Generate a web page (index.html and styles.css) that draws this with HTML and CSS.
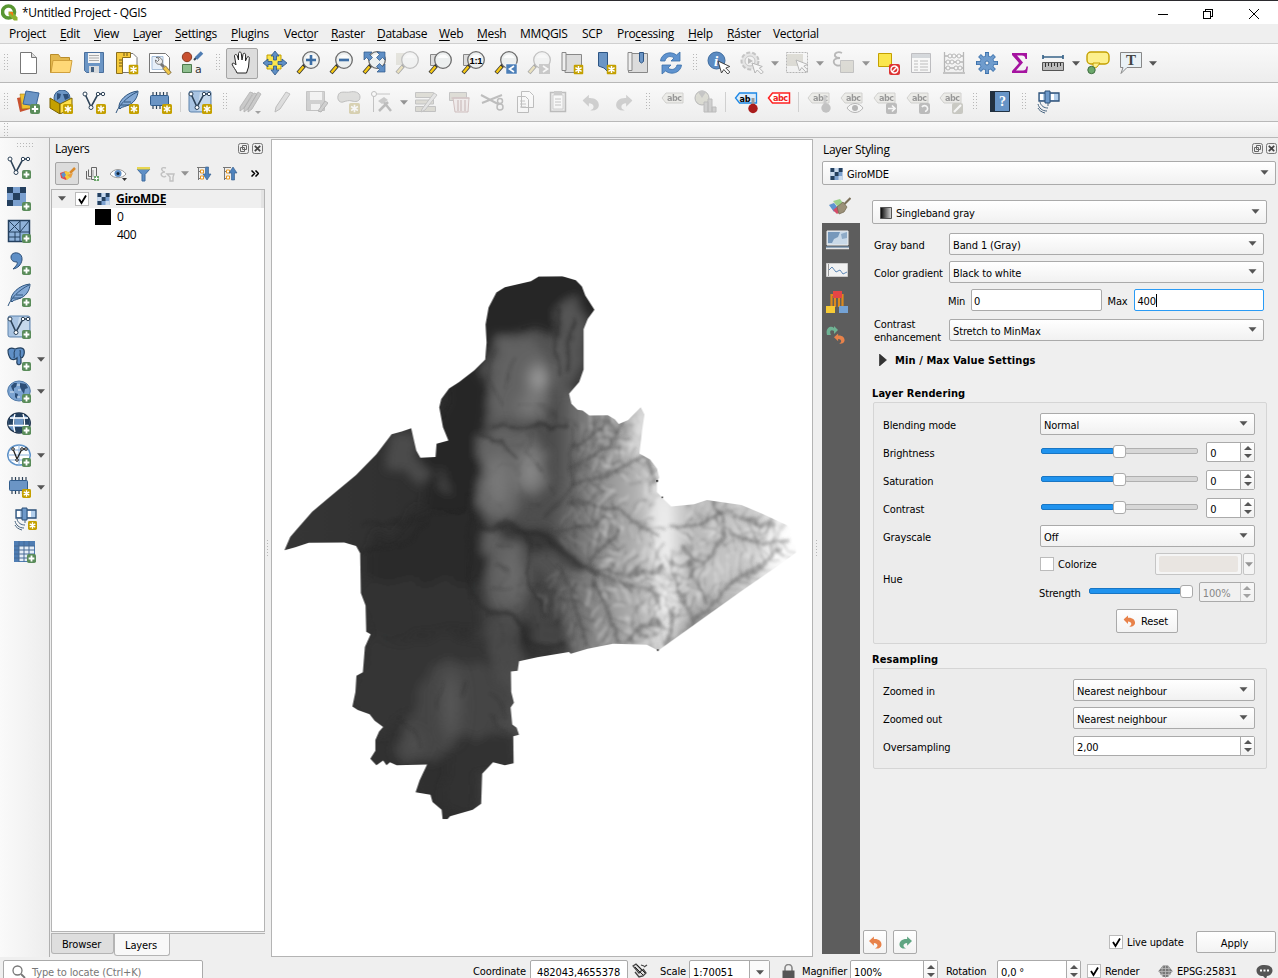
FILE: index.html
```html
<!DOCTYPE html>
<html lang="en">
<head>
<meta charset="utf-8">
<title>*Untitled Project - QGIS</title>
<link rel="stylesheet" href="styles.css">
</head>
<body>
<svg class="defs" width="0" height="0">
  <defs>
    <symbol id="new" viewBox="0 0 10 10"><rect width="10" height="10" rx="1.6" fill="#c4a000"/><path d="M5 1.5v7M1.9 3.2l6.2 3.6M8.1 3.2L1.9 6.8" stroke="#fff" stroke-width="1.500"/></symbol>
    <symbol id="add" viewBox="0 0 10 10"><rect width="10" height="10" rx="2" fill="#5a8c5a"/><path d="M5 1.800v6.400M1.800 5h6.400" stroke="#fff" stroke-width="2"/></symbol>
    <symbol id="lens" viewBox="0 0 24 24"><path d="M9 14l-7 8" stroke="#333" stroke-width="4"/><path d="M7.500 15.500l-5 6" stroke="#f6c915" stroke-width="2.400"/><circle cx="15" cy="9" r="8.300" fill="#ecefef" stroke="#6b6b6b" stroke-width="1.300"/><path d="M9.500 7a6 6 0 0 1 11 0" fill="#fff" opacity=".8"/></symbol>
    <symbol id="raster" viewBox="0 0 12 12"><path fill="#7ba0cf" d="M0 0h12v12H0z"/><path fill="#24405f" d="M0 0h4v4H0zM8 0h4v4H8zM4 4h4v4H4zM0 8h4v4H0z"/><path fill="#c9daee" d="M4 0h4v4H4zM0 4h4v4H0zM8 8h4v4H8z"/></symbol>
    <symbol id="down" viewBox="0 0 8 5"><path d="M0 .3h8L4 4.700z" fill="#555"/></symbol>
    <symbol id="undo" viewBox="0 0 12 12"><path d="M0 4.500L4.500.5v2.300C9 2.500 12 5 11.500 8.500 11 11 8.500 12 5.500 11.500 9 10.500 8.500 6.500 4.500 6.500V9z" fill="#e8824a"/></symbol>
    <symbol id="vee" viewBox="0 0 24 24"><path d="M3 4l6 13 7-13h5" fill="none" stroke="#2d4257" stroke-width="1.600"/><g fill="#fff" stroke="#2d4257"><circle cx="3" cy="4" r="2"/><circle cx="9" cy="17.500" r="2"/><circle cx="16" cy="4" r="1.700"/><circle cx="21" cy="4" r="1.700"/></g></symbol>
    <symbol id="veebox" viewBox="0 0 24 24"><rect x="1" y="1" width="22" height="21" rx="2" fill="#a9c4e2" stroke="#5f84ad"/><path d="M12 2h10v19H9z" fill="#dbe7f4" opacity=".6"/><use href="#vee" width="24" height="24"/></symbol>
    <symbol id="feather" viewBox="0 0 24 24"><path d="M4 18C3 11 12 2 23 1c0 6-4 13-12 15-2 1-5 1-6 3z" fill="#85aad6" stroke="#30567f"/><path d="M1 23C4 15 12 7 22 2M9 12h7M6 15l8 0" fill="none" stroke="#30567f"/></symbol>
    <symbol id="chip" viewBox="0 0 24 24"><path d="M5 2v17M8.500 2v17M12 2v17M15.500 2v17M19 2v17" stroke="#2d4257" stroke-width="1.200"/><rect x="2.500" y="5.500" width="18" height="10" rx="1" fill="#6b95c5" stroke="#325d8c"/></symbol>
    <symbol id="sat" viewBox="0 0 24 24"><path d="M2 3h20v8H2z" fill="#b3cfec" stroke="#2c5078" stroke-width="1.300"/><path d="M3 4h3v6H3zM14 4h3v6h-3z" fill="#fff"/><path d="M8 1h5v12H8z" fill="#6d99ca" stroke="#2c5078"/><path d="M11 13v3M1 14c1 4 4 7 9 7M3 12c1 4 4 6 8 6M1 18c1 2 3 4 7 5" fill="none" stroke="#46637f"/></symbol>
    <symbol id="tag" viewBox="0 0 24 24"><path d="M1 8l4-5h17v10H5z" fill="#dedccc" stroke="#99958a"/><text x="6" y="11" font-size="9" font-weight="bold" font-family="DejaVu Sans Condensed" textLength="15">abc</text></symbol>
    <symbol id="float" viewBox="0 0 11 11"><rect x=".5" y=".5" width="10" height="10" rx="2" fill="#eee" stroke="#777"/><path d="M4.500 2.500h4v4h-4zM2.500 4.500h4v4h-4z" fill="#eee" stroke="#666"/></symbol>
    <symbol id="close" viewBox="0 0 11 11"><rect x=".5" y=".5" width="10" height="10" rx="2" fill="#eee" stroke="#777"/><path d="M2.800 2.800l5.400 5.400M8.200 2.800L2.800 8.200" stroke="#444" stroke-width="1.700"/></symbol>
    <symbol id="globe" viewBox="0 0 24 24"><ellipse cx="12" cy="12" rx="11.300" ry="10" fill="#7ba3d1" stroke="#4f79a8"/></symbol>
    <symbol id="paint" viewBox="0 0 22 20"><path d="M0 7l10-4 3 7-6 7z" fill="#e9e4df"/><path d="M4 4l7-2 3 4-5 4z" fill="#9cd08a"/><path d="M0 8l5-2 4 5-4 4z" fill="#5d93cf"/><path d="M4 13l5-4 3 5-4 3z" fill="#d74c68"/><path d="M8 10l6-5 4 5-3 5-5 2z" fill="#9b9078" stroke="#6f654e" stroke-width=".7"/><path d="M15.500 7l6-6" stroke="#7c705a" stroke-width="2.200"/></symbol>
  </defs>
</svg>

<div class="app">
  <header class="titlebar">
    <svg class="logo" width="17" height="17" viewBox="0 0 17 17"><circle cx="7.500" cy="8" r="6" fill="none" stroke="#589632" stroke-width="3.600"/><path d="M7.500 7.500h3.500l5.500 6v3H13L7.500 11z" fill="#8db42f"/><path d="M8 8l4 0 0 4z" fill="#ee7913"/></svg>
    <span class="title">*Untitled Project - QGIS</span>
    <svg class="winbtns" width="110" height="14" viewBox="0 0 110 14" fill="none" stroke="#000" shape-rendering="crispEdges"><path d="M0 8.500h10M45.500 5.500h7v7h-7zM47.500 5V3.500h7v7H53"/><path d="M91 3l10 10M101 3L91 13" shape-rendering="auto"/></svg>
  </header>

  <nav class="menubar">
    <span>Pro<u>j</u>ect</span><span><u>E</u>dit</span><span><u>V</u>iew</span><span><u>L</u>ayer</span><span><u>S</u>ettings</span><span><u>P</u>lugins</span><span>Vect<u>o</u>r</span><span><u>R</u>aster</span><span><u>D</u>atabase</span><span><u>W</u>eb</span><span><u>M</u>esh</span><span>MMQGIS</span><span>SCP</span><span>Pro<u>c</u>essing</span><span><u>H</u>elp</span><span><u>R</u>áster</span><span>Vect<u>o</u>rial</span>
  </nav>

  <div class="toolbar">
    <i class="grip first"></i>
    <b><svg viewBox="0 0 24 24"><path d="M4.500 1.500h11l5 5v16h-16z" fill="#fff" stroke="#777"/><path d="M15.500 1.500v5h5" fill="#ddd" stroke="#777"/></svg></b>
    <b><svg viewBox="0 0 24 24"><path d="M1.500 3.500h8l2 3h9v15h-19z" fill="#e3b84e" stroke="#b98d2b"/><path d="M4 9.500h19l-2 12H2z" fill="#ffd877" stroke="#d0a03c"/></svg></b>
    <b><svg viewBox="0 0 24 24"><path d="M2.500 1.500h19v20h-17l-2-2z" fill="#6b95c5" stroke="#4a6f9c"/><path d="M6 2h12v10H6z" fill="#f3f3f3"/><path d="M7 4.500h10M7 7h10M7 9.500h10" stroke="#aaa"/><path d="M7 15h10v7H7z" fill="#d8dbde"/><path d="M9 16h3v5H9z" fill="#44607f"/></svg></b>
    <b><svg viewBox="0 0 24 24"><path d="M4 2.500h14l4 4v15H4z" fill="#fff" stroke="#777"/><path d="M1.500 1.500h14v5h-8v16h-6z" fill="#f5c93a" stroke="#8a6e1d"/><path d="M4 9h3M4 12h3M4 15h3M9 2v3M12 2v3" stroke="#6b5517"/><use href="#new" x="13.500" y="13.500" width="10" height="10"/></svg></b>
    <b><svg viewBox="0 0 24 24"><path d="M1.500 2.500h16l4 4v15h-20z" fill="#fff" stroke="#777"/><path d="M4 5.500h11v13H4z" fill="#e7eff8" stroke="#a7c0dc"/><path d="M13 13l3 3" stroke="#777" stroke-width="3"/><path d="M16 16l6 7" stroke="#8f7c4d" stroke-width="4.500"/><path d="M16.500 16.500l5 6" stroke="#f2c84a" stroke-width="2.800"/><path d="M8 6.500c2 0 3 1 3 2.500L9.500 10.500 7.500 9C7 13 11 14 13 13c2-1 2-4 0-5.500-1.500-1.500-3-1.500-5-1z" fill="#eee" stroke="#666" stroke-width=".9"/></svg></b>
    <b><svg viewBox="0 0 24 24"><circle cx="6" cy="6" r="4.700" fill="#c8502f" stroke="#8b3a22"/><path d="M13 9l3-3" stroke="#345" stroke-width="2"/><path d="M15 7.500l6-6" stroke="#4f7db3" stroke-width="3.500"/><path d="M1.500 13.500h9v8h-9z" fill="#8fbf8f" stroke="#4d7a4d"/><text x="14" y="21.500" font-size="11" font-family="DejaVu Sans" fill="#333">a</text></svg></b>
    <i class="grip" style="--w:16px"></i>
    <b class="on"><svg viewBox="0 0 24 24"><path d="M7 22C6 19 3 16 2 13c1-2 3 0 4 1L4.500 5c0-2 2.300-2 2.800 0L8.500 9V2.500c.2-2 2.500-2 2.800 0L12 9l1-5.500c.4-2 2.600-1.500 2.600.5L15.500 10l1.500-3.500c.8-1.500 2.700-.8 2.300.8L18.500 16l-2 6z" fill="#fff" stroke="#222"/></svg></b>
    <b><svg viewBox="0 0 24 24"><path d="M4 4h14v14H4z" fill="#fbe64d" stroke="#c4a000"/><path d="M12 0l4 5h-2.500v4h-3V5H8zM12 24l4-5h-2.500v-4h-3v4H8zM0 12l5-4v2.500h4v3H5V16zM24 12l-5-4v2.500h-4v3h4V16z" fill="#5f8fc6" stroke="#2d5584" stroke-width=".8"/></svg></b>
    <b><svg viewBox="0 0 24 24"><use href="#lens"/><path d="M15 4v10M10 9h10" stroke="#3d6ea5" stroke-width="2.600"/></svg></b>
    <b><svg viewBox="0 0 24 24"><use href="#lens"/><path d="M10 9h10" stroke="#3d6ea5" stroke-width="2.600"/></svg></b>
    <b><svg viewBox="0 0 24 24"><use href="#lens"/><path d="M2 1h8L7.500 3.500l3 3-3 3-3-3L2 9zM23 1v8l-2.500-2.500-3 3-3-3 3-3L15 1zM23 21h-8l2.500-2.500-3-3 3-3 3 3L23 13z" fill="#5f8fc6" stroke="#2d5584" stroke-width=".7"/></svg></b>
    <b class="off"><svg viewBox="0 0 24 24"><path d="M1 2h12v12H1z" fill="#ccc8a8"/><use href="#lens"/></svg></b>
    <b><svg viewBox="0 0 24 24"><path d="M2.500 3.500h10v11h-10z" fill="#ddd" stroke="#888"/><use href="#lens"/></svg></b>
    <b><svg viewBox="0 0 24 24"><path d="M2.500 3.500h10v11h-10z" fill="#ddd" stroke="#888"/><use href="#lens"/><text x="8.500" y="12.500" font-size="9.500" font-weight="bold" font-family="Liberation Sans" textLength="13">1:1</text></svg></b>
    <b><svg viewBox="0 0 24 24"><use href="#lens"/><path d="M12 13h11v10H12z" fill="#4c7fb8" stroke="#fff" stroke-width=".5"/><path d="M20 15l-4.500 3L20 21" fill="none" stroke="#fff" stroke-width="1.700"/></svg></b>
    <b class="off"><svg viewBox="0 0 24 24"><use href="#lens"/><path d="M12 13h11v10H12z" fill="#888"/><path d="M16 15l4.500 3L16 21" fill="none" stroke="#fff" stroke-width="1.700"/></svg></b>
    <b><svg viewBox="0 0 24 24"><path d="M5 3.500h16.500v18H5z" fill="#dcdcdc" stroke="#888"/><path d="M2 1.500h4v18H2z" fill="#eee" stroke="#888"/><use href="#new" x="13.500" y="13.500" width="10" height="10"/></svg></b>
    <b><svg viewBox="0 0 24 24"><path d="M5.500 1.500h9v19L11 17l-5.500-2z" fill="#6b95c5" stroke="#2d5584"/><use href="#new" x="13.500" y="13.500" width="10" height="10"/></svg></b>
    <b><svg viewBox="0 0 24 24"><path d="M5 2.500h16.500v19H2.500v-3" fill="#dcdcdc" stroke="#888"/><path d="M2 1.500h4v18H2z" fill="#eee" stroke="#888"/><path d="M13.500 1.500h4v9l-2 1.500-2-1.500z" fill="#6b95c5" stroke="#2d5584"/></svg></b>
    <b><svg viewBox="0 0 24 24"><path d="M1.500 10C2 3 11-1 17.500 4L21 1v9h-9l3-3C11 4 7 6 6 10z" fill="#5f93cf" stroke="#3a6ea8" stroke-width=".8"/><path d="M22.500 14C22 21 13 25 6.500 20L3 23v-9h9l-3 3c4 3 8 1 9-3z" fill="#5f93cf" stroke="#3a6ea8" stroke-width=".8"/></svg></b>
    <i class="grip" style="--w:15px"></i>
    <b><svg viewBox="0 0 24 24"><circle cx="9.500" cy="9.500" r="8.500" fill="#5b8bc2" stroke="#3d6b9e"/><text x="7" y="15" font-size="15" font-style="italic" font-weight="bold" font-family="Liberation Serif" fill="#fff">i</text><path d="M11 10l3.500 12 2.300-3.500 4 4.500 2-2-4-4 4-1.500z" fill="#fff" stroke="#333" stroke-width=".9"/></svg></b>
    <b class="off"><svg viewBox="0 0 24 24"><circle cx="10" cy="10" r="8.500" fill="#ccc" stroke="#777" stroke-width="2" stroke-dasharray="4 2"/><circle cx="10" cy="10" r="5" fill="#eee" stroke="#777"/><path d="M8 7l5 3-5 3z" fill="#666"/><path d="M12 12l3 10 2.300-3 4 4 2-2-4-4 3-1.500z" fill="#fff" stroke="#555"/></svg></b>
    <i class="dd off2" style="--w:12px"><svg width="8" height="5"><use href="#down"/></svg></i>
    <b class="off"><svg viewBox="0 0 24 24"><path d="M1.500 1.500h21v20h-21z" fill="none" stroke="#555" stroke-dasharray="2 1"/><path d="M2 3h16v12H2z" fill="#bbb695"/><path d="M11 9l3.500 11 2.300-3.500 4 4.500 2-2-4-4 4-1.500z" fill="#fff" stroke="#555"/></svg></b>
    <i class="dd off2" style="--w:13px"><svg width="8" height="5"><use href="#down"/></svg></i>
    <b class="off"><svg viewBox="0 0 24 24"><path d="M9.500 9.500h13v12h-13z" fill="#bbb695" stroke="#777"/><path d="M11 2C7 0 3 2 4 5c1 2 3 2 5 2-5 0-7 2-6 5s5 3 6 2" fill="none" stroke="#555" stroke-width="1.800"/></svg></b>
    <i class="dd off2" style="--w:12px"><svg width="8" height="5"><use href="#down"/></svg></i>
    <b><svg viewBox="0 0 24 24"><path d="M2.500 2.500h13v13h-13z" fill="#fbe64d" stroke="#c4a000"/><rect x="13" y="13" width="11" height="11" rx="2" fill="#d33"/><circle cx="18.500" cy="18.500" r="3.500" fill="none" stroke="#fff" stroke-width="1.400"/><path d="M21 16l-5 5" stroke="#fff" stroke-width="1.400"/></svg></b>
    <b class="off"><svg viewBox="0 0 24 24"><path d="M2.500 2.500h19v19h-19z" fill="#fff" stroke="#667"/><path d="M3 3h18v4H3z" fill="#9aabbd"/><path d="M5 10h4M5 13h4M5 16h4M5 19h4M11 10h8M11 13h8M11 16h8M11 19h8" stroke="#666"/></svg></b>
    <b class="off"><svg viewBox="0 0 24 24"><path d="M2.500 1v20M21.500 1v20M1 22h22M3 5h18M3 11h18M3 17h18" stroke="#555" stroke-width="1.300"/><g fill="#fff" stroke="#555"><circle cx="8" cy="5" r="2"/><circle cx="12" cy="5" r="2"/><circle cx="17" cy="5" r="2"/><circle cx="6" cy="11" r="2"/><circle cx="10" cy="11" r="2"/><circle cx="16" cy="11" r="2"/><circle cx="6" cy="17" r="2"/><circle cx="14" cy="17" r="2"/><circle cx="18" cy="17" r="2"/></g></svg></b>
    <b><svg viewBox="0 0 24 24"><g stroke="#3e73ad" stroke-width="4"><path d="M12 1v22M1 12h22M4.500 4.500l15 15M19.500 4.500l-15 15"/></g><circle cx="12" cy="12" r="7" fill="#6f9ccd" stroke="#4a7cb3"/><g stroke="#6f9ccd" stroke-width="2.500"><path d="M12 2v20M2 12h20M5 5l14 14M19 5L5 19"/></g><circle cx="12" cy="12" r="2" fill="#eee" stroke="#3e73ad"/></svg></b>
    <b><svg viewBox="0 0 24 24"><path d="M4 2h15v6h-1.500C17 5 16 4.500 14 4.500H9l6 7-7 8h7c2 0 3-1 3.500-4H20L19 22H4v-2l7-8-7-8z" fill="#a514a0"/></svg></b>
    <b><svg viewBox="0 0 24 24"><path d="M1.500 6h21M2 4v4M22 4v4" stroke="#396489" stroke-width="1.700"/><path d="M1.500 11.500h21v8h-21z" fill="#bbb" stroke="#555"/><path d="M4.500 12v4M7.500 12v3M10.500 12v4M13.500 12v3M16.500 12v4M19.500 12v3" stroke="#333"/></svg></b>
    <i class="dd" style="--w:12px"><svg width="8" height="5"><use href="#down"/></svg></i>
    <b><svg viewBox="0 0 24 24"><rect x="1" y="1" width="22" height="12" rx="4" fill="#fdf08d" stroke="#c4a000" stroke-width="1.400"/><path d="M7 12v5l-2 2 6-3 3-4z" fill="#fdf08d" stroke="#c4a000"/><circle cx="5.500" cy="19" r="3.700" fill="#6ba86b" stroke="#3f6d3f"/></svg></b>
    <b><svg viewBox="0 0 24 24"><path d="M1.500 1.500h21v15H8l-6 6 2-6H1.500z" fill="#eaf2f6" stroke="#888"/><text x="7" y="14" font-size="15" font-family="Liberation Serif" font-weight="bold" fill="#444">T</text></svg></b>
    <i class="dd" style="--w:11px"><svg width="8" height="5"><use href="#down"/></svg></i>
  </div>

  <div class="toolbar">
    <i class="grip first"></i>
    <b><svg viewBox="0 0 24 24"><path d="M1 8l10-2 3 13-10 3z" fill="#c8502f"/><path d="M4 4l10 0 2 14-10 1z" fill="#f0c030" stroke="#a58010" stroke-width=".6"/><path d="M10 1l13 2-3 13-13-2z" fill="#6b95c5" stroke="#3a6599"/><use href="#add" x="14" y="14" width="10" height="10"/></svg></b>
    <b><svg viewBox="0 0 24 24"><circle cx="13" cy="8" r="8" fill="#6b95c5" stroke="#38618f"/><path d="M8 3l4 1-1 4-3 2zM14 4l5 0 1 4-4 2z" fill="#2d4f78"/><path d="M1 8l10 6v10L1 18z" fill="#c4a000" stroke="#7a6300"/><path d="M11 14l12-6v10l-12 6z" fill="#ffe04b" stroke="#7a6300"/><use href="#new" x="14" y="14" width="10" height="10"/></svg></b>
    <b><svg viewBox="0 0 24 24"><use href="#vee"/><use href="#new" x="14" y="14" width="10" height="10"/></svg></b>
    <b><svg viewBox="0 0 24 24"><use href="#feather"/><use href="#new" x="14" y="14" width="10" height="10"/></svg></b>
    <b><svg viewBox="0 0 24 24"><use href="#chip"/><use href="#new" x="14" y="14" width="10" height="10"/></svg></b>
    <i class="sep"></i>
    <b><svg viewBox="0 0 24 24"><use href="#veebox"/><use href="#new" x="14" y="14" width="10" height="10"/></svg></b>
    <i class="grip" style="--w:17px"></i>
    <b class="off"><svg viewBox="0 0 24 24"><path d="M2 17L12 2l3 1-9 15-4 3zM6 18L16 3l3 1-9 15-4 3zM10 19L20 2l3 2-9 15-4 3z" fill="#888" stroke="#444" stroke-width=".8"/><path d="M17 21h6l-3 3z" fill="#222"/></svg></b>
    <b class="off"><svg viewBox="0 0 24 24"><path d="M5 17L15 2l4 2L9 19l-5 3z" fill="#bbb" stroke="#666"/></svg></b>
    <b class="off"><svg viewBox="0 0 24 24"><path d="M2.500 1.500h18v19h-18z" fill="#999" stroke="#777"/><path d="M6 2h12v8H6zM7 14h9v6H7z" fill="#eee"/><path d="M14 21l7-10 3 2-7 9z" fill="#999" stroke="#555"/></svg></b>
    <b class="off"><svg viewBox="0 0 24 24"><path d="M1 6C2 0 9 3 13 2s10 0 10 5-5 5-8 4-6 0-9 1-6-2-5-6z" fill="#b8b8b0" stroke="#666"/><use href="#new" x="12" y="13" width="11" height="11"/></svg></b>
    <b class="off"><svg viewBox="0 0 24 24"><path d="M3.500 22V5M6 4h14" stroke="#777"/><circle cx="4" cy="4" r="2.500" fill="#fff" stroke="#666"/><path d="M9 21l9-9M13 11l8 10" stroke="#666" stroke-width="2.500"/><path d="M8 11l6-4 4 3-6 4z" fill="#888"/></svg></b>
    <i class="dd off2" style="--w:11px"><svg width="8" height="5"><use href="#down"/></svg></i>
    <b class="off"><svg viewBox="0 0 24 24"><path d="M1.500 2.500h18v5h-18zM1.500 10h18v4h-18zM1.500 16.500h20v5h-20z" fill="#bbb695" stroke="#777"/><path d="M8 19L20 3l3 2-12 15-4 2z" fill="#ccc" stroke="#777"/></svg></b>
    <b class="off"><svg viewBox="0 0 24 24"><path d="M2.500 2.500h17v8h-17z" fill="#bbb695" stroke="#777"/><path d="M6 8h16l-1 14H8z" fill="#f3dada" stroke="#b66"/><path d="M4.500 8h18M11 10v11M14 10v11M18 10v11" stroke="#b77" stroke-width="1.500"/></svg></b>
    <b class="off"><svg viewBox="0 0 24 24"><path d="M1 5l17 9M2 13l20-8" stroke="#666" stroke-width="2"/><circle cx="20" cy="17" r="3" fill="none" stroke="#666" stroke-width="1.500"/><circle cx="20" cy="11" r="2.500" fill="none" stroke="#666" stroke-width="1.500"/></svg></b>
    <b class="off"><svg viewBox="0 0 24 24"><path d="M8.500 1.500h8l4 4v12h-12zM4.500 6.500h8l3 3v13h-11z" fill="#fff" stroke="#666"/><path d="M7 11h5M7 14h6M7 17h6" stroke="#777"/></svg></b>
    <b class="off"><svg viewBox="0 0 24 24"><path d="M4.500 2.500h15v19h-15z" fill="#ddd" stroke="#666" stroke-width="1.500"/><path d="M7 5h10v14H7z" fill="#fff" stroke="#999"/><path d="M8 1h8v4H8z" fill="#888"/><path d="M9 9h6M9 12h6M9 15h6" stroke="#777"/></svg></b>
    <b class="off"><svg class="m gray" viewBox="0 0 12 12"><use href="#undo"/></svg></b>
    <b class="off"><svg class="m gray" viewBox="0 0 12 12"><use href="#undo" transform="translate(12) scale(-1 1)"/></svg></b>
    <i class="grip" style="--w:15.5px"></i>
    <b class="off"><svg viewBox="0 0 24 24"><use href="#tag"/></svg></b>
    <b class="off"><svg viewBox="0 0 24 24"><circle cx="8" cy="8" r="7" fill="#b5b58a" stroke="#555"/><path d="M8 8L4 2a7 7 0 0 1 8 0z" fill="#777"/><path d="M10 12h4v10h-4zM14 9h4v13h-4zM18 17h4v5h-4z" fill="#999" stroke="#666"/></svg></b>
    <i class="sep"></i>
    <b><svg viewBox="0 0 24 24"><path d="M1.500 8l4-5h17v10h-17z" fill="#d9ebfb" stroke="#1e88e5" stroke-width="1.300"/><text x="5.500" y="11.500" font-size="9" font-weight="bold" font-family="DejaVu Sans Condensed" textLength="11">ab</text><path d="M19 8v8" stroke="#999" stroke-width="3"/><circle cx="19" cy="18.500" r="4.700" fill="#a91c1c"/></svg></b>
    <b><svg viewBox="0 0 24 24"><path d="M1.500 8l4-5h17v10h-17z" fill="#fff" stroke="#f22" stroke-width="1.500"/><text x="6" y="11" font-size="9" font-weight="bold" font-family="DejaVu Sans Condensed" textLength="15" fill="#e22">abc</text></svg></b>
    <i class="sep"></i>
    <b class="off"><svg viewBox="0 0 24 24"><use href="#tag"/><path d="M18 5v10" stroke="#888" stroke-width="3"/><circle cx="19" cy="18" r="4.700" fill="#777"/></svg></b>
    <b class="off"><svg viewBox="0 0 24 24"><use href="#tag"/><path d="M7 18c4-6 12-6 16 0-4 6-12 6-16 0z" fill="#fff" stroke="#555"/><circle cx="15" cy="18" r="3" fill="#555"/></svg></b>
    <b class="off"><svg viewBox="0 0 24 24"><use href="#tag"/><rect x="13" y="13" width="11" height="11" rx="2" fill="#666"/><path d="M15 18.500h7M19 15.500l3 3-3 3" fill="none" stroke="#fff" stroke-width="1.700"/></svg></b>
    <b class="off"><svg viewBox="0 0 24 24"><use href="#tag"/><rect x="13" y="13" width="11" height="11" rx="2" fill="#666"/><path d="M16 17a3 3 0 1 1 3 4.500" fill="none" stroke="#fff" stroke-width="1.700"/></svg></b>
    <b class="off"><svg viewBox="0 0 24 24"><use href="#tag"/><rect x="13" y="13" width="11" height="11" rx="2" fill="#8a8a6a"/><path d="M15 22l7-7" stroke="#fff" stroke-width="2.200"/></svg></b>
    <i class="grip" style="--w:16px"></i>
    <b><svg viewBox="0 0 24 24"><path d="M2.500 1.500h19v20h-19z" fill="#6794c6" stroke="#234"/><path d="M2 1h5v21H2z" fill="#22303f"/><text x="11" y="16" font-size="14" font-family="Liberation Serif" font-weight="bold" fill="#fff">?</text></svg></b>
    <i class="grip" style="--w:16.5px"></i>
    <b><svg viewBox="0 0 24 24"><use href="#sat"/></svg></b>
  </div>
  <div class="toolbar thin"><i class="grip first"></i></div>

  <main class="main">
    <aside class="sidebar">
      <i class="hgrip"></i>
      <b><svg viewBox="0 0 24 24"><use href="#vee"/><use href="#add" x="15" y="15" width="9" height="9"/></svg></b>
      <b><svg viewBox="0 0 24 24"><path d="M0 0h19v19H0z" fill="#7ba0cf"/><path d="M0 0h6v6H0zM13 0h6v6h-6zM6 6h7v7H6zM0 13h6v6H0z" fill="#24405f"/><use href="#add" x="15" y="15" width="9" height="9"/></svg></b>
      <b><svg viewBox="0 0 24 24"><path d="M1.500 1.500h21v21h-21z" fill="#8fb2da" stroke="#24405f" stroke-width="1.500"/><path d="M2 2l11 11M13 2L2 13M13 2v20M2 13h21M13 13l9-11M8 13v9M2 18h11" stroke="#24405f" fill="none"/><use href="#add" x="15" y="15" width="9" height="9"/></svg></b>
      <b><svg viewBox="0 0 24 24"><path d="M4 6c0-6 12-6 11 3-1 5-4 8-9 9 3-3 5-5 4-7-3 0-6-1-6-5z" fill="#5f8fc6" stroke="#2d4f78"/><use href="#add" x="15" y="15" width="9" height="9"/></svg></b>
      <b><svg viewBox="0 0 24 24"><use href="#feather"/><use href="#add" x="15" y="15" width="9" height="9"/></svg></b>
      <b><svg viewBox="0 0 24 24"><use href="#veebox"/><use href="#add" x="15" y="15" width="9" height="9"/></svg></b>
      <b><svg viewBox="0 0 24 24"><path d="M1 3c2-3 5-2 7-1 3-1 8-2 9 1 1 4-1 8-3 8l0 5c-1 3-5 2-4-2v-3c-2 2-4 2-6 1-2-2-3-6-3-9z" fill="#5f8fc6" stroke="#24405f" stroke-width="1.200"/><path d="M8 3c-2 3 0 5-1 8M13 3c1 3-1 5 1 8" stroke="#24405f" fill="none"/><use href="#add" x="15" y="15" width="9" height="9"/></svg><svg class="dn"><use href="#down"/></svg></b>
      <b><svg viewBox="0 0 24 24"><use href="#globe"/><path d="M4 7l3-3 3 0-1 4-2 1 0 4-2-3zM13 4l6 1 2 4-3 1-1 5-2-3-2-4zM8 14l3 1-1 5-2-2z" fill="#2d4f78"/><path d="M3 13h4M10 6h3M11 11h3M15 17h3M10 18h3" stroke="#dce8f5"/><use href="#add" x="15" y="15" width="9" height="9"/></svg><svg class="dn"><use href="#down"/></svg></b>
      <b><svg viewBox="0 0 24 24"><ellipse cx="12" cy="12" rx="11.300" ry="10" fill="#6b95c5" stroke="#1c3048" stroke-width="1.300"/><path d="M8 2.500h8v4H8zM1.500 8h6v6h-6zM16 8h6.500v6H16zM8 16h8v5H8z" fill="#24405f"/><path d="M3 7h18M1.500 14.500h20M8 3c-2 6-2 12 0 18M16 3c2 6 2 12 0 18" stroke="#fff" fill="none" stroke-width="1.300"/><use href="#add" x="15" y="15" width="9" height="9"/></svg></b>
      <b><svg viewBox="0 0 24 24"><ellipse cx="12" cy="12" rx="11.300" ry="10" fill="#fff" stroke="#5f93c9" stroke-width="1.500"/><path d="M12 2v20M1 12h22M3 7h18M3 17h18" stroke="#8bb2dc" fill="none"/><path d="M6 6l4 10 5-10h4" stroke="#222" fill="none" stroke-width="1.300"/><g fill="#fff" stroke="#222"><circle cx="6" cy="6" r="1.300"/><circle cx="10" cy="17" r="1.300"/><circle cx="15" cy="6" r="1.300"/><circle cx="19" cy="6" r="1.300"/></g><use href="#add" x="15" y="15" width="9" height="9"/></svg><svg class="dn"><use href="#down"/></svg></b>
      <b><svg viewBox="0 0 24 24"><use href="#chip"/><use href="#new" x="15" y="14" width="9" height="9"/></svg><svg class="dn"><use href="#down"/></svg></b>
      <b class="in"><svg viewBox="0 0 24 24"><use href="#sat"/><use href="#new" x="14" y="14" width="9" height="9"/></svg></b>
      <b class="in tbl"><svg viewBox="0 0 24 24"><path d="M1.500 1.500h20v20h-20z" fill="#e6eef7" stroke="#4f7db3"/><path d="M1 1h21v5H1zM1 1h5v21H1z" fill="#4f7db3"/><path d="M11 1v21M16 1v21M6 1v21M1 6h21M1 10h21M1 14h21M1 18h21" stroke="#466a94"/><use href="#add" x="14" y="14" width="9" height="9"/></svg></b>
    </aside>

    <section class="layers">
      <div class="docktitle"><span>Layers</span><svg width="11" height="11"><use href="#float"/></svg><svg width="11" height="11"><use href="#close"/></svg></div>
      <div class="layertools">
        <b class="on"><svg width="17" height="16" viewBox="0 0 17 16"><path d="M1 7l6-2 4 5-4 4-5-2z" fill="#e24a4a"/><path d="M6 5l4 1 2 5-4 3-3-5z" fill="#f6c93c"/><path d="M2 8l3-2 2 3-3 3z" fill="#5d93cf"/><path d="M8 9l4 3 2-5" fill="#e8a040"/><path d="M11 7l5-5" stroke="#d98a2b" stroke-width="2.500"/></svg></b>
        <b style="--w:27px"><svg width="15" height="16" viewBox="0 0 15 16"><path d="M1.500 5v8h4M3.500 3.500v7h3M6.500 1.500h5v12h-5z" fill="none" stroke="#666"/><path d="M8 4v7" stroke="#999"/><rect x="9" y="10" width="5" height="5" fill="#6aa56a"/><path d="M11.500 10.500v4M9.500 12.500h4" stroke="#fff"/></svg></b>
        <b style="--w:25px"><svg width="18" height="16" viewBox="0 0 18 16"><path d="M0 8c4-6 12-6 16 0-4 5-12 5-16 0z" fill="#fff" stroke="#999"/><circle cx="8" cy="7.500" r="3.500" fill="#5f8fc6"/><circle cx="8" cy="7.500" r="1.500" fill="#123"/><path d="M12 12h5l-2.500 3z" fill="#333"/></svg></b>
        <b style="--w:24px"><svg width="15" height="16" viewBox="0 0 15 16"><path d="M1 3h13L9 8.500V15H6V8.500z" fill="#5f8fc6" stroke="#3d6b9e"/><path d="M1 1h13v2.500H1z" fill="#e8d650"/></svg></b>
        <b class="off" style="--w:25px"><svg width="15" height="16" viewBox="0 0 15 16"><path d="M6 2C3 1 1 2 2 4s3 2 3 2C2 6 0 8 2 10s4 0 4 0M7 8h7l-1 3v4h-3v-4z" fill="none" stroke="#777" stroke-width="1.400"/></svg></b>
        <b class="off2" style="--w:9px"><svg width="8" height="5"><use href="#down"/></svg></b>
        <b style="--w:29px"><svg width="16" height="16" viewBox="0 0 16 16"><path d="M1 1.500h8M2.500 2v12M2 5.500h4M2 12.500h4" stroke="#777"/><path d="M4.500 4h3v3h-3zM4.500 10h3v3h-3z" fill="#fff" stroke="#e8971e"/><path d="M9.500 1h3v7H15l-4 6-4-6h2.500z" fill="#4f83bd" stroke="#2d5584" stroke-width=".6"/></svg></b>
        <b style="--w:23px"><svg width="16" height="16" viewBox="0 0 16 16"><path d="M1 1.500h8M2.500 2v12M2 5.500h4M2 12.500h4" stroke="#777"/><path d="M4.500 4h3v3h-3zM4.500 10h3v3h-3z" fill="#fff" stroke="#e8971e"/><path d="M9.500 14h3V7H15l-4-6-4 6h2.500z" fill="#4f83bd" stroke="#2d5584" stroke-width=".6"/></svg></b>
        <b style="--w:28px"><svg width="8" height="7" viewBox="0 0 8 7" fill="none" stroke="#000" stroke-width="1.500"><path d="M.5.500l3 3-3 3M4.500.500l3 3-3 3"/></svg></b>
      </div>
      <div class="tree">
        <div class="trow head"><svg width="8" height="5"><use href="#down"/></svg><i class="check"><svg width="11" height="11" viewBox="0 0 11 11"><path d="M2 5l2.500 4L9 1.500" fill="none" stroke="#000" stroke-width="1.800"/></svg></i><svg class="ras" width="13" height="12"><use href="#raster"/></svg><span class="lname">GiroMDE</span></div>
        <div class="trow leaf"><i class="black"></i><span>0</span></div>
        <div class="trow leaf"><i></i><span>400</span></div>
      </div>
      <div class="tabs"><span class="tab back">Browser</span><span class="tab front">Layers</span></div>
    </section>
    <i class="vgrip"></i>

    <section class="canvas">
      <svg class="map" width="530" height="565" viewBox="0 0 1568 1568" preserveAspectRatio="none">
        <defs>
          <clipPath id="land"><path shape-rendering="crispEdges" d="M28 792L45 755 75 722 110 685 160 645 240 583 300 525 345 470 375 462 403 453 410 482 418 515 430 535 475 533 478 496 513 487 497 450 486 395 492 372 515 343 545 325 590 292 622 262 626 215 623 165 632 118 655 76 680 62 757 45 780 32 850 31 890 42 908 60 918 85 945 124 925 150 913 178 913 290 900 325 870 357 877 385 895 402 910 404 930 418 985 417 1005 428 1017 441 1045 430 1082 395 1093 415 1086 460 1078 523 1110 540 1130 565 1137 590 1130 605 1130 630 1150 650 1172 670 1240 664 1278 652 1380 666 1440 690 1515 722 1542 752 1542 798 1480 840 1380 905 1134 1070 1100 1054 1000 1051 925 1065 875 1079 870 1074 780 1088 722 1100 718 1126 698 1128 699 1185 707 1215 697 1228 702 1275 715 1284 722 1304 705 1308 706 1383 680 1388 645 1380 613 1412 610 1495 585 1512 518 1530 510 1538 496 1538 493 1512 466 1490 460 1470 416 1463 428 1430 450 1386 360 1388 340 1380 330 1388 320 1375 300 1388 282 1370 297 1348 297 1318 308 1295 320 1282 295 1265 280 1247 245 1235 229 1225 238 1185 241 1140 260 1130 266 1060 283 1025 270 1018 268 945 254 910 252 800 240 780 205 770 100 771 60 783Z"/></clipPath>
          <linearGradient id="elev" gradientUnits="userSpaceOnUse" x1="0" x2="1568" y1="0" y2="0"><stop offset="0" stop-color="#363636"/><stop offset=".36" stop-color="#2e2e2e"/><stop offset=".42" stop-color="#4a4a4a"/><stop offset=".52" stop-color="#545454"/><stop offset=".57" stop-color="#707070"/><stop offset=".63" stop-color="#979797"/><stop offset=".7" stop-color="#bcbcbc"/><stop offset=".74" stop-color="#dcdcdc"/><stop offset=".79" stop-color="#bcbcbc"/><stop offset=".9" stop-color="#cacaca"/><stop offset=".975" stop-color="#fff"/></linearGradient>
          <linearGradient id="fade" gradientUnits="userSpaceOnUse" x1="560" x2="1560" y1="0" y2="0"><stop offset="0" stop-color="#000"/><stop offset=".12" stop-color="#666"/><stop offset=".35" stop-color="#fff"/><stop offset=".85" stop-color="#ddd"/><stop offset="1" stop-color="#000"/></linearGradient>
          <mask id="east" maskUnits="userSpaceOnUse" x="0" y="0" width="1568" height="1568"><path d="M560 380h1008v760H560z" fill="url(#fade)"/></mask>
          <filter id="relief" filterUnits="userSpaceOnUse" x="560" y="380" width="1000" height="720"><feTurbulence type="turbulence" baseFrequency=".009" numOctaves="4" seed="12"/><feColorMatrix values="3.2 0 0 0 .3  3.2 0 0 0 .3  3.2 0 0 0 .3  0 0 0 0 1"/><feGaussianBlur stdDeviation="3"/></filter>
          <filter id="s1" x="-10%" y="-10%" width="120%" height="120%"><feTurbulence type="fractalNoise" baseFrequency=".012" numOctaves="3" seed="4"/><feDisplacementMap in="SourceGraphic" scale="45" xChannelSelector="R" yChannelSelector="G"/><feGaussianBlur stdDeviation="4.500"/></filter>
          <filter id="s2" x="-20%" y="-20%" width="140%" height="140%"><feTurbulence type="fractalNoise" baseFrequency=".014" numOctaves="3" seed="9"/><feDisplacementMap in="SourceGraphic" scale="70" xChannelSelector="R" yChannelSelector="G"/><feGaussianBlur stdDeviation="14"/></filter>
          <filter id="s3" x="-50%" y="-50%" width="200%" height="200%"><feGaussianBlur stdDeviation="24"/></filter>
        </defs>
        <g clip-path="url(#land)">
          <path d="M0 0h1568v1568H0z" fill="url(#elev)"/>
          <path d="M780 300l70 40 0 260-40 110-80 20-30-200z" fill="#4e4e4e" filter="url(#s3)"/>
          <g filter="url(#s2)">
            <path d="M600 0h400v190l-90 170-60-10-10-160-180-15-40 100-10 200 10 400-60 30-100-100-20-300 60-100z" fill="#262626"/>
            <path d="M845 90h40l30 60-5 160-50 50-25-40z" fill="#555"/>
            <path d="M665 190l90 20 50 80v140l-180 15 5-130z" fill="#626262"/>
            <path d="M605 470l150-10 40 60-10 110-70 20-20 60-90-10z" fill="#646464"/>
            <path d="M610 730l110 10 20 220-110-20z" fill="#5e5e5e"/>
            <path d="M420 690l180-10-10 260-160 60-170-60V790z" fill="#2c2c2c"/>
            <path d="M250 880l340 0v130l-310 30z" fill="#303131"/>
            <path d="M270 1040h350v80l-150 90-170 90-80-70z" fill="#353535"/>
            <path d="M330 480l80-20 50 130-50 20-80-60z" fill="#4b4b4b"/>
            <path d="M490 550l20 80-35-20z" fill="#444"/>
            <path d="M635 990l80 10 5 100-90 40z" fill="#484848"/>
            <path d="M480 1090l110 20 110 60-10 100-140 60-90 60-110-30 50-110z" fill="#454545"/>
            <path d="M530 1310l180-10v90l-110 30-10 110-90-30z" fill="#323232"/>
            <path d="M730 980l100 40 50 60-150 20z" fill="#2d2e2e"/>
            <path d="M610 720l100 0 100 20 110 110-20 20-90-70-60-10-90-50z" fill="#383838"/>
            <path d="M750 820l80 60 40 180-110 0z" fill="#444"/>
          </g>
          <g filter="url(#s3)"><ellipse cx="780" cy="315" rx="26" ry="35" fill="#b0b0b0"/><ellipse cx="755" cy="390" rx="36" ry="22" fill="#868686"/><ellipse cx="755" cy="570" rx="32" ry="60" fill="#8c8c8c"/><ellipse cx="660" cy="600" rx="35" ry="80" fill="#7a7a7a"/><path d="M1065 390h40l-10 150-40-20z" fill="#f2f2f2"/><path d="M1110 560l60 110 10 380-40 0-20-330z" fill="#f2f2f2"/><path d="M1480 720l100 0-40 90-110 60z" fill="#fff"/><ellipse cx="520" cy="1220" rx="24" ry="100" fill="#5c5c5c"/><ellipse cx="700" cy="850" rx="16" ry="80" fill="#747474"/><ellipse cx="410" cy="1330" rx="24" ry="30" fill="#555"/></g>
          <g mask="url(#east)" class="relief"><path d="M560 380h1000v720H560z" filter="url(#relief)"/></g>
          <g filter="url(#s1)" fill="none" stroke="#252525" opacity=".42" stroke-linecap="round">
            <path d="M640 450L800 452 860 440" stroke-width="9"/><path d="M610 475C650 475 690 510 720 530" stroke-width="7"/><path d="M840 120L830 240 845 300" stroke-width="9"/><path d="M885 150L867 230 875 290" stroke-width="10"/><path d="M875 450L867 620 805 700" stroke-width="10" opacity=".6"/>
            <path d="M605 720L700 730 805 755 885 820 945 860" stroke-width="16"/><path d="M625 960L705 985 745 1045 845 1060" stroke-width="14"/><path d="M255 720L380 710 560 675M250 800L390 770 460 710" stroke-width="8"/><path d="M740 745L755 890 805 960" stroke-width="8"/><path d="M570 640L575 900 625 960" stroke-width="10"/>
            <g opacity=".55"><path d="M650 240L640 330 670 380M700 260L680 330M760 470L750 520 790 560M650 780L700 790M650 830L700 840M650 890L700 900" stroke-width="5"/><path d="M630 1190L690 1250M640 1250L690 1290M570 1160L560 1200M500 1150L480 1230M380 1250L430 1330" stroke-width="6"/></g>
          </g>
          <g id="valleys" filter="url(#s1)" fill="none" stroke="#3d3d3d" stroke-linecap="round">
            <path class="valley" d="M860 665C930 655 1000 670 1050 700S1090 735 1130 750"/>
            <path class="valley" d="M865 615C930 600 1000 580 1060 550S1100 560 1125 590"/>
            <path class="valley" d="M940 850C1000 880 1060 880 1090 900S1125 940 1140 960"/>
            <path class="valley" d="M930 835C960 790 1000 770 1015 740"/>
            <path class="valley" d="M820 740C880 730 930 720 980 700"/>
            <path class="valley" d="M985 845C1040 860 1080 850 1140 835"/>
            <path class="valley" d="M870 510C920 490 960 450 990 430"/>
            <path class="valley" d="M870 560C940 545 980 520 1030 450"/>
            <path class="valley" d="M840 840C870 900 900 960 920 1050"/>
            <path class="valley" d="M940 880C980 940 1000 980 1010 1050"/>
            <path class="valley" d="M1030 1050C1050 1010 1090 990 1150 1000"/>
            <path class="valley" d="M1290 660C1340 700 1350 730 1310 780S1270 840 1200 790"/>
            <path class="valley" d="M1350 740C1400 770 1450 790 1520 760"/>
            <path class="valley" d="M1340 680C1400 700 1430 720 1480 730"/>
            <path class="valley" d="M1230 1000C1290 950 1310 900 1370 870S1440 830 1500 790"/>
            <path class="valley" d="M1240 980C1210 930 1190 860 1170 820"/>
            <path class="valley" d="M1270 930C1260 880 1240 850 1220 820"/>
            <path class="valley" d="M1180 720C1230 730 1280 710 1330 690"/>
            <path class="valley" d="M1160 1040C1180 1000 1170 970 1190 960"/>
            <path class="valley" d="M760 890C790 880 820 900 860 940"/>
          </g>
          <path d="M1134 1085L1400 905 1270 950 1190 1010z" fill="#666" opacity=".55" filter="url(#s3)"/>
        </g>
        <path d="M1128 597h5v5h-5zM1144 643h4v4h-4zM1130 1067h5v4h-5z" fill="#111"/>
      </svg>
    </section>
    <i class="vgrip right"></i>

    <section class="styling">
      <div class="docktitle"><span>Layer Styling</span><svg width="11" height="11"><use href="#float"/></svg><svg width="11" height="11"><use href="#close"/></svg></div>
      <div class="combo layercombo"><svg width="13" height="12"><use href="#raster"/></svg><span>GiroMDE</span><svg class="arr"><use href="#down"/></svg></div>
      <div class="stylebody">
        <div class="sidetabs">
          <b class="cur"><svg width="22" height="20"><use href="#paint"/></svg></b>
          <b style="--h:34px"><svg width="23" height="21" viewBox="0 0 23 21"><path d="M1 1h21v14H1z" fill="#c9d9e8" stroke="#eee"/><path d="M2 2h12l-2 5-4 2-2 4H2z" fill="#7698bb"/><path d="M15 4l6-2v6l-5 1z" fill="#8fabc7"/><path d="M0 18h23" stroke="#e5e5e5" stroke-width="2.500"/><path d="M0 17h23" stroke="#446c93"/></svg></b>
          <b style="--h:26px"><svg width="22" height="15" viewBox="0 0 22 15"><path d="M.5.500h21v13H.5z" fill="#f1f1f1" stroke="#ccc"/><path d="M2.500 1v12" stroke="#999"/><path d="M3 7l3-3 4 5 4-2 3 4 4-2" fill="none" stroke="#5e88b5"/></svg></b>
          <b style="--h:38px"><svg width="22" height="23" viewBox="0 0 22 23"><path d="M5.500 15V4h11v11M9 6v10M13 6v10" stroke="#dd8a1d" stroke-width="2.200" fill="none"/><path d="M7 0h9v7H7z" fill="#e64545"/><path d="M0 15h9v7H0z" fill="#f7cb35"/><path d="M13 15h9v7h-9z" fill="#74a2d4"/></svg></b>
          <b style="--h:28px"><svg width="20" height="20" viewBox="0 0 20 20"><use href="#undo" x="8" y="8" width="11" height="11"/><path d="M1 10C-1 3 5 0 8 3l0-2 4 4-4 4V6C5 4 3 6 5 10z" fill="#6fb394"/></svg></b>
        </div>
        <div class="pane">
          <div class="combo big"><svg width="12" height="12" viewBox="0 0 12 12"><defs><linearGradient id="bw"><stop offset="0"/><stop offset="1" stop-color="#ddd"/></linearGradient></defs><path d="M.5.500h11v11H.5z" fill="url(#bw)" stroke="#555"/></svg><span>Singleband gray</span><svg class="arr"><use href="#down"/></svg></div>
          <div class="row"><label>Gray band</label><div class="combo"><span>Band 1 (Gray)</span><svg class="arr"><use href="#down"/></svg></div></div>
          <div class="row"><label>Color gradient</label><div class="combo"><span>Black to white</span><svg class="arr"><use href="#down"/></svg></div></div>
          <div class="row minmax"><span>Min</span><div class="field">0</div><span>Max</span><div class="field focus">400<i class="caret"></i></div></div>
          <div class="row tall"><label>Contrast<br>enhancement</label><div class="combo"><span>Stretch to MinMax</span><svg class="arr"><use href="#down"/></svg></div></div>
          <div class="fold"><svg width="8" height="12" viewBox="0 0 8 12"><path d="M.5 0l7 6-7 6z" fill="#333" stroke="#111" stroke-width=".5"/></svg>Min / Max Value Settings</div>
          <h3>Layer Rendering</h3>
          <div class="group">
            <div class="row"><label>Blending mode</label><div class="combo"><span>Normal</span><svg class="arr"><use href="#down"/></svg></div></div>
            <div class="row"><label>Brightness</label><div class="slider"><i></i><b></b><i></i></div><div class="spin"><span>0</span><em></em></div></div>
            <div class="row"><label>Saturation</label><div class="slider"><i></i><b></b><i></i></div><div class="spin"><span>0</span><em></em></div></div>
            <div class="row"><label>Contrast</label><div class="slider"><i></i><b></b><i></i></div><div class="spin"><span>0</span><em></em></div></div>
            <div class="row"><label>Grayscale</label><div class="combo"><span>Off</span><svg class="arr"><use href="#down"/></svg></div></div>
            <div class="hue">
              <label>Hue</label>
              <div class="huebox">
                <div class="row"><i class="check"></i><span class="cz">Colorize</span><div class="color"><i></i></div><div class="colordd"><svg width="8" height="5"><use href="#down"/></svg></div></div>
                <div class="row"><span class="st">Strength</span><div class="slider full"><i></i><b></b></div><div class="spin dis"><span>100%</span><em></em></div></div>
                <div class="row"><div class="btn reset"><svg width="13" height="12" viewBox="0 0 12 12"><use href="#undo"/></svg>Reset</div></div>
              </div>
            </div>
          </div>
          <h3 class="res">Resampling</h3>
          <div class="group wide">
            <div class="row"><label>Zoomed in</label><div class="combo"><span>Nearest neighbour</span><svg class="arr"><use href="#down"/></svg></div></div>
            <div class="row"><label>Zoomed out</label><div class="combo"><span>Nearest neighbour</span><svg class="arr"><use href="#down"/></svg></div></div>
            <div class="row"><label>Oversampling</label><div class="spin"><span>2,00</span><em></em></div></div>
          </div>
          <div class="foot">
            <div class="btn sq"><svg width="13" height="13" viewBox="0 0 12 12"><use href="#undo"/></svg></div>
            <div class="btn sq two"><svg class="green" width="13" height="13" viewBox="0 0 12 12"><use href="#undo" transform="translate(12) scale(-1 1)"/></svg></div>
            <i class="check live"><svg width="11" height="11" viewBox="0 0 11 11"><path d="M2 5l2.500 4L9 1.500" fill="none" stroke="#000" stroke-width="1.800"/></svg></i><span class="lu">Live update</span><div class="btn apply">Apply</div>
          </div>
        </div>
      </div>
    </section>
  </main>

  <footer class="status">
    <div class="locate"><svg width="14" height="14" viewBox="0 0 14 14"><circle cx="5.500" cy="5.500" r="4.500" fill="none" stroke="#777" stroke-width="1.300"/><path d="M9 9l4 4" stroke="#777" stroke-width="1.800"/></svg>Type to locate (Ctrl+K)</div>
    <span class="s-coord">Coordinate</span><div class="field coord">482043,4655378</div>
    <svg class="ext" width="16" height="16" viewBox="0 0 16 16"><path d="M1 3l3-2 6 6-3 3zM9 2l3 1M12 4l3-2M3 9l4 5 4-1 3-3-3-4" fill="#ddd" stroke="#444" stroke-width="1.300"/><path d="M3 4l8 8M5 2l8 8" stroke="#222"/></svg>
    <span class="s-scale">Scale</span><div class="field scale"><span>1:70051</span><i><svg width="8" height="5"><use href="#down"/></svg></i></div>
    <svg class="lock" width="13" height="15" viewBox="0 0 13 15"><path d="M3 7V4a3.500 3.500 0 0 1 7 0v3" fill="none" stroke="#888" stroke-width="1.600"/><path d="M.5 6.500h12V15H.5z" fill="#555"/></svg>
    <span class="s-mag">Magnifier</span><div class="spin mag"><span>100%</span><em></em></div>
    <span class="s-rot">Rotation</span><div class="spin rot"><span>0,0 °</span><em></em></div>
    <i class="check"><svg width="11" height="11" viewBox="0 0 11 11"><path d="M2 5l2.500 4L9 1.500" fill="none" stroke="#000" stroke-width="1.800"/></svg></i><span class="s-render">Render</span>
    <svg class="crs" width="15" height="15" viewBox="0 0 15 15"><path d="M5 1.500h5l4.500 5.500L10 13H5L.5 7z" fill="#777"/><path d="M0 7.500h15M2 4.500h11M2 10.500h11M7.500 1v13M5 2C3.500 6 3.500 9 5 13M10 2c1.500 4 1.500 7 0 11" fill="none" stroke="#bbb" stroke-width=".8"/></svg><span class="s-epsg">EPSG:25831</span>
    <svg class="msg" width="17" height="16" viewBox="0 0 17 16"><path d="M8.500 1C13 1 16.500 3 16.500 6.500S13 12 11 12l-1 3-3-3C3 12 .5 10 .5 6.500S4 1 8.500 1z" fill="#555"/><path d="M4 5.500h2v2H4zM7.500 5.500h2v2h-2zM11 5.500h2v2h-2z" fill="#fff"/></svg>
  </footer>
</div>
<script src="terrain.js"></script>
</body>
</html>
```
FILE: styles.css
```css
* { box-sizing: border-box; }
body { margin: 0; background: #efefef; color: #000; font: 11px/13px "DejaVu Sans Condensed", "DejaVu Sans", sans-serif; letter-spacing: -.13px; }
.defs { position: absolute; }
svg { display: block; flex: none; letter-spacing: 0; }
b, i, em { font-weight: normal; font-style: normal; }
.app { width: 1278px; height: 978px; overflow: hidden; display: flex; flex-direction: column; white-space: nowrap; }

.titlebar { height: 24px; flex: none; background: #fff; border-top: 1px solid #2b2a2e; display: flex; align-items: center; font: 12px/16px "Open Sans", sans-serif; }
.logo { margin-left: 1px; }
.title { margin-left: 4px; letter-spacing: -.3px; flex: 1; }
.winbtns { margin-right: 10px; }
.menubar { height: 20px; flex: none; padding-left: 9px; border-bottom: 1px solid #d0d0d0; display: grid; grid-template-columns: 51px 34px 39px 42px 56px 53px 47px 46px 62px 38px 43px 62px 35px 71px 39px 46px 50px; font: 12px/20px "Open Sans", sans-serif; letter-spacing: -.33px; }
.menubar u { text-underline-offset: 2px; }

.toolbar { height: 39px; flex: none; display: flex; align-items: center; background: linear-gradient(#fafafa, #ededed); border-bottom: 1px solid #b8b8b8; }
.toolbar.thin { height: 16px; }
.toolbar > b { width: 33px; height: 33px; flex: none; display: grid; place-items: center; }
.toolbar > b > svg { width: 24px; height: 24px; }
.toolbar > b > svg.m { width: 18px; height: 17px; }
.toolbar > b.on { width: 32px; height: 31px; margin-right: 1px; border: 1px solid #a5a5a5; border-radius: 2px; background: #dcdcdc; }
.gray { filter: grayscale(1); }
.green { filter: hue-rotate(120deg) saturate(.5); }
.off { opacity: .38; filter: grayscale(.5); }
.off2 { opacity: .6; }
.grip, .hgrip, .vgrip { background: conic-gradient(from 270deg at 1px 1px, #b8b8b8 90deg, transparent 0) 0 0 / 3px 3px content-box content-box; }
.grip { width: var(--w); height: 18px; flex: none; display: block; padding: 0 calc((var(--w) - 4px) / 2); }
.grip.first { --w: 11.5px; padding: 0 3.5px 0 4px; }
.thin .grip { height: 14px; }
.dd { width: var(--w); flex: none; display: grid; place-items: center; overflow: visible; }
.dd svg { width: 8px; height: 5px; }
.sep { width: 1px; height: 20px; margin: 0 3px; background: #d0d0d0; flex: none; }

.main { height: 819px; flex: none; display: flex; }
.sidebar { width: 50px; height: 819px; flex: none; background: linear-gradient(90deg, #fafafa, #ededed); border-right: 1px solid #b0b0b0; display: flex; flex-direction: column; }
.hgrip { width: 17px; height: 6px; margin: 5px 0 2px 17px; }
.sidebar b { height: 32px; padding-left: 7px; display: flex; align-items: center; }
.sidebar b svg:first-child { width: 24px; height: 24px; }
.sidebar b.in { padding-left: 14px; }
.sidebar b.tbl { padding: 1px 0 0 13px; }
.sidebar .dn { width: 8px; height: 5px; margin-left: 6px; }

.docktitle { height: 23px; display: flex; align-items: center; gap: 3px; }
.docktitle span { flex: 1; padding-top: 2px; }
.layers { width: 215px; flex: none; display: flex; flex-direction: column; }
.layers .docktitle { padding: 0 2px 2px 5px; font: 12px/14px "Open Sans", sans-serif; letter-spacing: -.3px; }
.layertools { height: 28px; padding: 0 0 2px 5px; display: flex; align-items: center; }
.layertools b { width: var(--w); flex: none; display: grid; place-items: center; height: 23px; }
.layertools .on { width: 24px; border: 1px solid #a5a5a5; border-radius: 2px; background: #dcdcdc; }
.tree { margin-left: 1px; height: 744px; background: #fff; border: 1px solid #b4b4b4; font: 12px/18px "Open Sans", sans-serif; letter-spacing: -.5px; }
.trow { height: 18px; display: flex; align-items: center; }
.trow span { padding-top: 1px; }
.trow.head { padding-left: 6px; background: #efefef; border-right: 3px solid #e3e3e3; }
.check { width: 14px; height: 14px; flex: none; border: 1px solid #bbb; background: #fff; display: grid; place-items: center; }
.trow .check { margin: 1px 0 0 9px; }
.ras { margin: 1px 0 0 8px; }
.lname { margin-left: 6px; font-weight: bold; text-decoration: underline; letter-spacing: -.3px; }
.leaf i { width: 16px; height: 16px; margin: 0 6px 0 43px; }
.leaf .black { background: #000; }
.tabs { margin: 1px 0 0 1px; height: 24px; border-top: 1px solid #b4b4b4; display: flex; align-items: flex-start; }
.tab { border: 1px solid #b4b4b4; border-top: 0; border-radius: 0 0 3px 3px; text-align: center; }
.back { width: 63px; height: 20px; line-height: 21px; padding-right: 2px; background: #dedede; }
.front { width: 56px; height: 22px; line-height: 23px; padding-right: 2px; background: #f8f8f8; }
.vgrip { width: 3px; height: 18px; margin: 402px 1px 0 2px; flex: none; }
.vgrip.right { width: 3px; margin: 402px 3px 0; }
.canvas { width: 542px; height: 818px; margin-top: 1px; flex: none; background: #fff; border: 1px solid #b4b4b4; padding: 125px 0 0 3px; overflow: hidden; }
.relief { mix-blend-mode: multiply; opacity: .5; }

.styling { width: 456px; flex: none; display: flex; flex-direction: column; }
.styling .docktitle { padding: 0 1px 2px 1px; font: 12px/14px "Open Sans", sans-serif; letter-spacing: -.3px; }
.combo { height: 22px; display: flex; align-items: center; border: 1px solid #aaa; border-radius: 2px; background: linear-gradient(#fff, #f1f1f1); padding: 1px 6px 0 3px; }
.combo span { flex: 1; padding-top: 1px; }
.arr { width: 9px; height: 5px; margin-top: -2px; }
.layercombo { height: 24px; flex: none; width: 454px; padding-left: 7px; }
.layercombo span, .big span { margin-left: 4px; }
.stylebody { margin-top: 3px; height: 766px; display: flex; }
.sidetabs { width: 38px; background: #5d5d5d; }
.sidetabs b { height: var(--h); display: flex; align-items: center; padding-left: 4px; }
.sidetabs .cur { --h: 35px; background: #efefef; padding: 3px 0 0 7px; }
.pane { width: 418px; padding: 12px 11px 0 12px; display: flex; flex-direction: column; }
.big { height: 24px; padding-left: 7px; margin-bottom: 6px; flex: none; }
.row { height: 28px; display: flex; align-items: center; flex: none; }
.row label { padding-top: 2px; }
.pane > .row { padding: 0 3px 0 2px; }
.pane > .row label { width: 75px; }
.pane > .row .combo { flex: 1; }
.pane > .tall { height: 32px; }
.pane > .minmax { padding-left: 76px; }
.minmax > span { padding-top: 2px; }
.minmax span:first-child { width: 23px; }
.minmax span:nth-of-type(2) { width: 27px; margin-left: 6px; }
.field { height: 22px; border: 1px solid #aaa; border-radius: 2px; background: #fff; padding: 2px 2px 0; line-height: 19px; }
.minmax .field { width: 131px; }
.minmax .focus { width: 130px; border-color: #2a9bf5; display: flex; }
.caret { width: 1px; height: 13px; margin-top: 2px; background: #000; }
.fold { height: 28px; padding-left: 7px; display: flex; align-items: center; gap: 8px; flex: none; }
.fold, h3 { font: bold 11px/13px "DejaVu Sans Condensed", sans-serif; letter-spacing: .1px; }
h3 { height: 18px; margin: 10px 0 0; padding-top: 3px; flex: none; }
h3.res { height: 24px; margin: 0; padding-top: 9px; }
.group { margin-left: 1px; border: 1px solid #d5d5d5; border-radius: 2px; background: #ececec; height: 242px; padding: 7px 11px 0 9px; flex: none; }
.group label { width: 157px; flex: none; }
.group .combo { flex: 1; }
.wide { height: 101px; }
.wide label { width: 190px; }
.slider { width: 158px; height: 14px; display: flex; align-items: center; margin: 0 8px 2px 1px; }
.slider i { flex: 1; height: 6px; border: 1px solid #b0b0b0; border-radius: 2px; background: #d7d7d7; }
.slider i:first-child { background: #2093ee; border-color: #1976c4; }
.slider b { width: 13px; height: 13px; margin: 0 -1px; border: 1px solid #aaa; border-radius: 3px; background: #fff; }
.slider.full { width: 103px; margin: 0 7px 2px 8px; }
.spin { width: 48px; height: 20px; border: 1px solid #aaa; border-radius: 2px; background: #fff; display: flex; align-items: center; }
.row .slider + .spin { width: 49px; }
.spin span { flex: 1; padding: 2px 0 0 3px; }
.spin em { width: 14px; height: 100%; border-left: 1px solid #aaa; background: linear-gradient(#fff, #f1f1f1); display: flex; flex-direction: column; align-items: center; justify-content: center; gap: 4px; }
.spin em::before { content: ""; border: 4px solid transparent; border-top: 0; border-bottom: 4px solid #555; }
.spin em::after { content: ""; border: 4px solid transparent; border-bottom: 0; border-top: 4px solid #555; }
.row .slider.full + .spin { width: 56px; }
.wide .spin { flex: 1; }
.spin.dis { color: #888; background: #f1f1f1; }
.dis em { opacity: .5; }
.hue { display: flex; align-items: center; }
.hue label { width: 156px; padding-bottom: 26px; }
.huebox { flex: 1; }
.huebox .check { margin-left: 1px; }
.st { padding-top: 2px; }
.cz { margin-left: 4px; width: 97px; padding-top: 1px; }
.color { width: 87px; height: 22px; border: 1px solid #c5c5c5; border-radius: 2px; background: #f5f5f5; padding: 2px 3px; }
.color i { display: block; height: 16px; border-radius: 2px; background: #e9e5e1; }
.colordd { width: 12px; height: 22px; margin-left: 1px; border: 1px solid #c5c5c5; border-radius: 2px; background: #f5f5f5; display: grid; place-items: center; }
.colordd svg { opacity: .6; }
.btn { border: 1px solid #aaa; border-radius: 2px; background: linear-gradient(#fff, #f3f3f3); display: flex; align-items: center; justify-content: center; }
.reset { width: 62px; height: 24px; margin: 1px 0 0 77px; gap: 5px; padding: 1px 3px 0 0; }
.foot { margin: auto -9px 0 -9px; height: 24px; display: flex; align-items: center; }
.sq { width: 24px; height: 24px; }
.two { margin-left: 6px; }
.live { margin: 0 4px 0 192px; }
.lu { padding-top: 1px; }
.apply { width: 80px; height: 22px; margin-left: auto; padding: 2px 3px 0 0; }

.status { height: 30px; flex: none; display: flex; align-items: flex-start; padding: 3px 0 0 3px; }
.status > * { flex: none; }
.status > span { line-height: 24px; }
.locate { width: 200px; height: 24px; border: 1px solid #aaa; border-radius: 2px; background: #fff; color: #777; display: flex; align-items: center; padding-left: 8px; gap: 6px; }
.s-coord { margin-left: 270px; width: 57px; }
.coord { width: 98px; height: 24px; padding-left: 6px; line-height: 20px; }
.ext { margin: 3px 0 0 4px; }
.s-scale { margin-left: 12px; width: 29px; }
.scale { width: 81px; height: 24px; display: flex; padding: 0; line-height: 23px; }
.scale span { width: 59px; padding-left: 3px; }
.scale i { flex: 1; border-left: 1px solid #aaa; display: grid; place-items: center; background: #fafafa; }
.lock { margin: 4px 0 0 12px; }
.s-mag { margin-left: 7px; width: 48px; }
.status .spin { height: 24px; }
.status .spin span { padding-top: 1px; }
.status .spin em { padding-bottom: 3px; }
.mag.spin { width: 88px; }
.s-rot { margin-left: 8px; width: 51px; }
.rot.spin { width: 84px; }
.status .check { margin: 4px 4px 0 6px; }
.s-render { width: 53px; }
.crs { margin-top: 4px; }
.s-epsg { margin-left: 4px; width: 79px; }
.msg { margin-top: 4px; }
```
FILE: terrain.js
```js
// Grows side gullies and the ridges between them from each main valley line.
const NS = "http://www.w3.org/2000/svg";
const layer = document.getElementById("valleys");
const noise = n => { const v = Math.sin(n * 127.1) * 43758.5; return v - Math.floor(v); };
const stroke = (d, width, color, opacity) => {
  const p = document.createElementNS(NS, "path");
  p.setAttribute("d", d);
  p.setAttribute("stroke-width", width);
  p.setAttribute("stroke", color);
  p.setAttribute("opacity", opacity);
  layer.appendChild(p);
};
let seed = 1;
for (const main of [...layer.querySelectorAll(".valley")]) {
  main.setAttribute("stroke-width", 12);
  main.setAttribute("opacity", 0.34);
  const length = main.getTotalLength();
  for (let s = 12; s < length; s += 19) {
    const a = main.getPointAtLength(s), b = main.getPointAtLength(s + 3);
    const dir = Math.atan2(b.y - a.y, b.x - a.x);
    const side = seed % 2 ? 1 : -1;
    const reach = 30 + noise(seed) * 42;
    const turn = 0.65 + noise(seed + 50) * 0.5;
    const mx = a.x + Math.cos(dir + side * (turn + 0.5)) * reach * 0.5;
    const my = a.y + Math.sin(dir + side * (turn + 0.5)) * reach * 0.5;
    const ex = a.x + Math.cos(dir + side * turn) * reach;
    const ey = a.y + Math.sin(dir + side * turn) * reach;
    stroke(`M${a.x} ${a.y}Q${mx} ${my} ${ex} ${ey}`, 7, "#484848", 0.27);
    const rx = a.x + Math.cos(dir + side * 1.3) * 24, ry = a.y + Math.sin(dir + side * 1.3) * 24;
    stroke(`M${rx} ${ry}l${Math.cos(dir + side * 0.9) * 34} ${Math.sin(dir + side * 0.9) * 34}`, 9, "#fff", a.x > 940 ? 0.24 : 0.08);
    seed++;
  }
}
```
